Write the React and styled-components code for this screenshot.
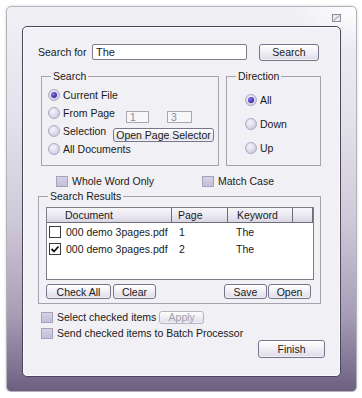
import React from "react";
import styled, { createGlobalStyle } from "styled-components";

const Global = createGlobalStyle`
  html, body { margin: 0; padding: 0; background: #ffffff; }
  body { font-family: "Liberation Sans", Arial, sans-serif; font-size: 10.5px; color: #1a1a1a; }
`;

const Frame = styled.div`
  margin: 6px 0 0 6px;
  width: 351px;
  height: 386px;
  box-sizing: border-box;
  border: 1px solid #b4b2bc;
  border-radius: 5px;
  padding: 0 15px;
  display: flex;
  flex-direction: column;
  background:
    radial-gradient(ellipse 90px 60px at 100% 0%, rgba(255,255,255,0.9), rgba(255,255,255,0) 70%),
    linear-gradient(to bottom, #f1f0f5 0%, #e3e1ea 30%, #cfcad9 55%, #a79eb6 80%, #7b7090 95%, #6a5f7e 100%);
  box-shadow: 0 0 3px rgba(0,0,0,0.18);
`;

const TitleBar = styled.div`
  height: 19px;
  box-sizing: border-box;
  padding-top: 7px;
  display: flex;
  justify-content: flex-end;
  align-items: flex-start;
`;

const Panel = styled.div`
  height: 351px;
  box-sizing: border-box;
  border: 1px solid #4c4559;
  border-radius: 5px;
  background: #f1f0f4;
  box-shadow: inset 0 0 0 1px #fafafc;
  display: flex;
  flex-direction: column;
  padding-top: 16px;
`;

const SearchRow = styled.div`
  display: flex;
  align-items: center;
  height: 18px;
  padding-left: 15px;
`;

const FieldLabel = styled.span`
  width: 54px;
  white-space: nowrap;
`;

const TextInput = styled.div`
  width: 155px;
  height: 16px;
  box-sizing: border-box;
  border: 1px solid #7f7d8a;
  border-radius: 2px;
  background: #fff;
  padding-left: 3px;
  line-height: 14px;
  font-size: 11px;
`;

const Button = styled.div`
  width: ${(p) => p.$w}px;
  height: ${(p) => p.$h || 15}px;
  margin-left: ${(p) => p.$ml || 0}px;
  margin-top: ${(p) => p.$mt || 0}px;
  box-sizing: border-box;
  border: 1px solid ${(p) => (p.$disabled ? "#b6b4c0" : "#77758a")};
  border-radius: 3px;
  background: linear-gradient(to bottom, #ffffff 0%, #f1f0f5 45%, #dedbe7 100%);
  color: ${(p) => (p.$disabled ? "#a4a2ac" : "#1a1a1a")};
  display: flex;
  align-items: center;
  justify-content: center;
  white-space: nowrap;
  flex-shrink: 0;
  box-shadow: inset 0 -1px 0 rgba(255,255,255,0.6);
`;

const GroupsRow = styled.div`
  display: flex;
  gap: 7px;
  margin-top: 9px;
  padding-left: 18px;
`;

const Group = styled.fieldset`
  margin: 0 0 0 ${(p) => p.$ml || 0}px;
  padding: 0;
  min-width: 0;
  width: ${(p) => p.$w}px;
  height: ${(p) => p.$h}px;
  box-sizing: border-box;
  border: 1px solid #a4a2ac;
  border-radius: 0;
`;

const Legend = styled.legend`
  margin-left: 9px;
  padding: 0 2px;
  line-height: 13px;
  height: 13px;
`;

const RadioGrid = styled.div`
  display: grid;
  grid-template-columns: ${(p) => p.$cols};
  grid-auto-rows: ${(p) => p.$row}px;
  padding: ${(p) => p.$pt}px 0 0 ${(p) => p.$pl}px;
  align-items: center;
`;

const Option = styled.div`
  display: flex;
  align-items: center;
  gap: 3px;
  white-space: nowrap;
`;

const Radio = styled.span`
  width: 12px;
  height: 12px;
  box-sizing: border-box;
  border-radius: 50%;
  border: 1px solid #aea8c2;
  background: radial-gradient(circle at 40% 35%, #f6f5fb 0%, #dcd7ea 55%, #c3bcd6 100%);
  display: flex;
  align-items: center;
  justify-content: center;
  flex-shrink: 0;
  &::after {
    content: "";
    display: ${(p) => (p.$on ? "block" : "none")};
    width: 6px;
    height: 6px;
    border-radius: 50%;
    background: radial-gradient(circle at 35% 35%, #8a7ee6 0%, #4232b0 60%, #2a1e86 100%);
  }
`;

const PageCell = styled.div`
  display: flex;
  align-self: start;
  margin-top: ${(p) => p.$mt}px;
  padding-left: ${(p) => p.$pl || 0}px;
  gap: 18px;
`;

const SmallInput = styled.div`
  width: ${(p) => p.$w}px;
  height: 12px;
  box-sizing: border-box;
  border: 1px solid #a9a7b2;
  background: #f7f7f9;
  color: #8a8894;
  padding-left: 3px;
  line-height: 10px;
  font-size: 10.5px;
`;

const CheckRow = styled.div`
  display: flex;
  align-items: center;
  height: 12px;
  margin-top: 9px;
  padding-left: 33px;
`;

const CheckItem = styled.div`
  display: flex;
  align-items: center;
  gap: 4px;
  width: ${(p) => (p.$w ? `${p.$w}px` : "auto")};
  white-space: nowrap;
`;

const Lav = styled.span`
  width: 12px;
  height: 11px;
  box-sizing: border-box;
  border: 1px solid #a7a1bb;
  background: linear-gradient(to bottom, #d6d1e4, #c5bed7);
  flex-shrink: 0;
`;

const ListView = styled.div`
  margin: 4px 0 0 7px;
  width: 268px;
  height: 73px;
  box-sizing: border-box;
  border: 1px solid #7d7b88;
  background: #ffffff;
`;

const ListGrid = styled.div`
  display: grid;
  grid-template-columns: 125px 56px 65px 1fr;
`;

const HeadCell = styled.div`
  height: 15px;
  box-sizing: border-box;
  border-right: 1px solid #6f6d7c;
  border-bottom: 1px solid #6f6d7c;
  background: linear-gradient(to bottom, #f7f6fa 0%, #e8e6ef 60%, #d9d6e3 100%);
  padding-left: ${(p) => p.$pl || 0}px;
  line-height: 14px;
  white-space: nowrap;
  &:last-child { border-right: none; }
`;

const Cell = styled.div`
  height: 17px;
  display: flex;
  align-items: center;
  gap: 5px;
  padding-left: ${(p) => p.$pl || 0}px;
  white-space: nowrap;
`;

const BoxCheck = styled.span`
  width: 12px;
  height: 12px;
  box-sizing: border-box;
  border: 1px solid #3a3a40;
  background: #fff;
  display: flex;
  align-items: center;
  justify-content: center;
  flex-shrink: 0;
`;

const ButtonsRow = styled.div`
  margin: 4px 0 0 7px;
  width: 265px;
  display: flex;
  justify-content: space-between;
`;

const ButtonGroup = styled.div`
  display: flex;
  gap: ${(p) => p.$gap}px;
`;

const Footer = styled.div`
  display: flex;
  flex-direction: column;
  margin-top: 5px;
  padding-left: 18px;
`;

const FooterRow = styled.div`
  display: flex;
  align-items: center;
  height: 16px;
  gap: 3px;
`;

const FinishRow = styled.div`
  display: flex;
  justify-content: flex-end;
  padding-right: 15px;
  margin-top: -1px;
`;

const ResizeIcon = () => (
  <svg width="9" height="8" viewBox="0 0 9 8">
    <rect x="0.5" y="0.5" width="8" height="7" fill="#eceaf1" stroke="#8f8d99" />
    <path d="M1.5 6.5 L7.5 1.5" stroke="#8f8d99" strokeWidth="1" />
  </svg>
);

const CheckMark = () => (
  <svg width="10" height="10" viewBox="0 0 10 10">
    <path d="M1.5 5 L4 7.5 L8.5 2.5" fill="none" stroke="#111" strokeWidth="1.8" />
  </svg>
);

const rows = [
  { doc: "000 demo 3pages.pdf", page: "1", kw: "The", checked: false },
  { doc: "000 demo 3pages.pdf", page: "2", kw: "The", checked: true },
];

export default function App() {
  return (
    <>
      <Global />
      <Frame>
        <TitleBar>
          <ResizeIcon />
        </TitleBar>
        <Panel>
          <SearchRow>
            <FieldLabel>Search for</FieldLabel>
            <TextInput>The</TextInput>
            <Button $w={60} $h={17} $ml={12}>Search</Button>
          </SearchRow>

          <GroupsRow>
            <Group $w={178} $h={96}>
              <Legend>Search</Legend>
              <RadioGrid $cols="65px 1fr" $row={18} $pt={3} $pl={6}>
                <Option><Radio $on />Current File</Option>
                <div />
                <Option><Radio />From Page</Option>
                <PageCell $mt={7} $pl={13}>
                  <SmallInput $w={23}>1</SmallInput>
                  <SmallInput $w={25}>3</SmallInput>
                </PageCell>
                <Option><Radio />Selection</Option>
                <PageCell $mt={6}>
                  <Button $w={101} $h={14}>Open Page Selector</Button>
                </PageCell>
                <Option><Radio />All Documents</Option>
                <div />
              </RadioGrid>
            </Group>
            <Group $w={95} $h={96}>
              <Legend>Direction</Legend>
              <RadioGrid $cols="1fr" $row={24} $pt={5} $pl={18}>
                <Option><Radio $on />All</Option>
                <Option><Radio />Down</Option>
                <Option><Radio />Up</Option>
              </RadioGrid>
            </Group>
          </GroupsRow>

          <CheckRow>
            <CheckItem $w={146}><Lav />Whole Word Only</CheckItem>
            <CheckItem><Lav />Match Case</CheckItem>
          </CheckRow>

          <Group $w={283} $h={114} $ml={15} style={{ marginTop: 3 }}>
            <Legend>Search Results</Legend>
            <ListView>
              <ListGrid>
                <HeadCell $pl={18}>Document</HeadCell>
                <HeadCell $pl={6}>Page</HeadCell>
                <HeadCell $pl={9}>Keyword</HeadCell>
                <HeadCell />
                {rows.map((r, i) => (
                  <React.Fragment key={i}>
                    <Cell $pl={2}>
                      <BoxCheck>{r.checked && <CheckMark />}</BoxCheck>
                      {r.doc}
                    </Cell>
                    <Cell $pl={7}>{r.page}</Cell>
                    <Cell $pl={8}>{r.kw}</Cell>
                    <Cell />
                  </React.Fragment>
                ))}
              </ListGrid>
            </ListView>
            <ButtonsRow>
              <ButtonGroup $gap={2}>
                <Button $w={65}>Check All</Button>
                <Button $w={43}>Clear</Button>
              </ButtonGroup>
              <ButtonGroup $gap={1}>
                <Button $w={43}>Save</Button>
                <Button $w={43}>Open</Button>
              </ButtonGroup>
            </ButtonsRow>
          </Group>

          <Footer>
            <FooterRow>
              <CheckItem><Lav />Select checked items</CheckItem>
              <Button $w={45} $h={13} $disabled>Apply</Button>
            </FooterRow>
            <FooterRow>
              <CheckItem><Lav />Send checked items to Batch Processor</CheckItem>
            </FooterRow>
          </Footer>
          <FinishRow>
            <Button $w={67} $h={18}>Finish</Button>
          </FinishRow>
        </Panel>
      </Frame>
    </>
  );
}
